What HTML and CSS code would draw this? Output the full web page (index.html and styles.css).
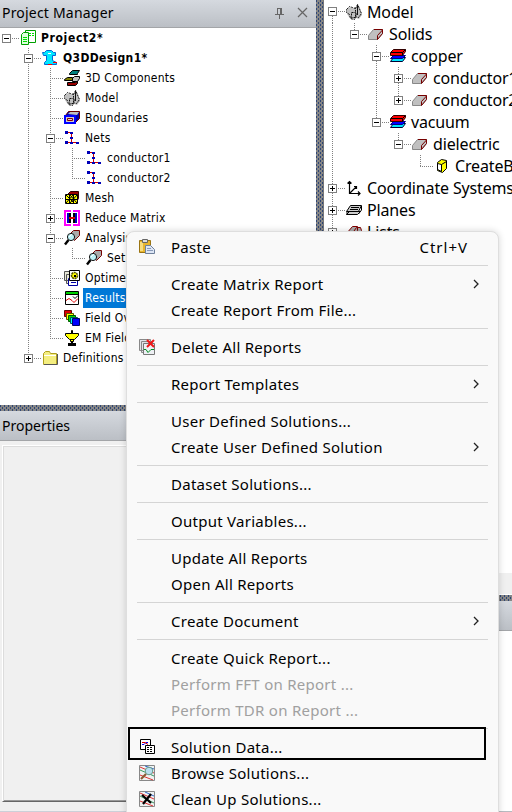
FILE: index.html
```html
<!DOCTYPE html>
<html lang="en">
<head>
<meta charset="utf-8">
<title>Project Manager</title>
<link rel="stylesheet" href="styles.css">
</head>
<body>
<svg class="defs" shape-rendering="crispEdges">
  <symbol id="project" viewBox="0 0 16 16"><path fill="#fff" stroke="#00a000" d="M5.500 .5h10v12h-7M5.500.5v3"/><path fill="#dfffdf" stroke="#00a000" d="M1.500 4.500l2-2h5v12h-7z"/><path stroke="#00e000" d="M9 3.500h2M12 3.500h2M9 5.500h2M12 5.500h2M3 7.500h4M3 9.500h4M3 11.500h4"/></symbol>
  <symbol id="design" viewBox="0 0 16 16"><path fill="#00e8ff" stroke="#0068d8" d="M.5 2.500h2l2-2h5l2 2h2v3h-3v5l4 2v2h-12v-2l2-2v-5h-3z"/><path stroke="#f00" d="M6 14.500h4M11 12.500h4"/><path stroke="#fff" d="M6 3.500h3"/></symbol>
  <symbol id="comps" viewBox="0 0 16 16"><path fill="#008080" stroke="#000" d="M5.500 3.500l3-3h7l-2 3v1h-8z"/><path fill="#c0c0c0" stroke="#000" d="M8.500 8.500l2-2h5v2l-2 3h-5z"/><path fill="#808000" stroke="#000" d="M.5 9.500l3-2h5v3h-8z"/><path fill="#900" stroke="#000" d="M3.500 12.500h8l2-1v2l-2 2h-8z"/></symbol>
  <symbol id="model" viewBox="0 0 16 16"><path fill="#c0c0c0" d="M1 5l3-2 3 1 3-1 2-3 2 4 2 7-3 4-3-1-4 2-3-3-2-3z"/><path stroke="#111" stroke-dasharray="2 1" d="M.5 5.500l3-3 3 1 3 1v3l1 4-2 4-4-1-1-4-3-2zM9.500 4.500l2-4 4 9-3 4h-2M5.500 8.500h4v5h-4z"/><path stroke="#111" d="M11.500 1v10"/></symbol>
  <symbol id="bound" viewBox="0 0 16 16"><path fill="#00a" stroke="#600" d="M1.500 5.500l3-4h11v7l-4 4z"/><path fill="#c0c0c0" d="M4 4l2-2h9l-2 3z"/><path fill="#ccc" stroke="#00f" stroke-width="2" d="M1 6h10v7H1z"/><path fill="#d8d8d8" stroke="#800" d="M3.500 8.500h5v2h-5z"/></symbol>
  <symbol id="nets" viewBox="0 0 16 16"><path stroke="#d00000" d="M2 2.500h7M2 12.500h12M7.500 2v10"/><path fill="#0000b8" d="M1 1h3v3H1zM6 2h3v2H6zM6 7h3v2H6zM1 11h3v3H1zM6 12h3v2H6zM12 12h3v2h-3z"/></symbol>
  <symbol id="mesh" viewBox="0 0 16 16"><path fill="#900" stroke="#300" d="M3.500 4.500l3-3h8v7l-2 3z"/><path fill="#ff0" stroke="#000" d="M1.500 4.500h12v9h-12z"/><path stroke="#000" d="M1.500 9.500h12M5.500 4.500v9M9.500 4.500v9M2 5l8 8M6 5l7 8M13 5l-7 8M9 5l-7 8"/></symbol>
  <symbol id="matrix" viewBox="0 0 16 16"><path fill="#f0f" d="M0 0h7v2H2v12h5v2H0zM9 0h7v16H9v-2h5V2H9z"/><path fill="#0000c0" d="M3 3h2v10H3zM11 3h2v10h-2z"/><path fill="#000" d="M5 3h2v10H5zM9 3h2v10H9z"/><path fill="#d00" d="M5 7h6v2H5z"/></symbol>
  <symbol id="analysis" viewBox="0 0 16 16"><path fill="#aaa" stroke="#700" d="M5.500 4.500l4-4h6v5l-5 5z"/><g shape-rendering="auto"><circle cx="7" cy="7" r="3.600" fill="#bdf3f8" stroke="#111"/><path stroke="#fff" d="M5 7l3-3"/><path stroke="#000" stroke-width="2.400" d="M4.500 10L1 14.500"/></g></symbol>
  <symbol id="opti" viewBox="0 0 16 16"><path fill="#e8e8d8" stroke="#555" d="M.5 1.500h8v9h-8zM2.500 4.500h8v9h-8z"/><path fill="#fff" stroke="#0000a0" d="M4.500 8.500h9v7h-9z"/><path fill="#fff" stroke="#000" d="M5.500.5h10v10h-10z"/><circle cx="10.500" cy="5.500" r="3" fill="#ff0" stroke="#550" stroke-width="1.600" stroke-dasharray="2 .6"/><path fill="#000" d="M10 5h2v2h-2z"/><path stroke="#00a" d="M7 12.500h5"/></symbol>
  <symbol id="results" viewBox="0 0 16 16"><path fill="#fff" stroke="#000" d="M1.500 1.500h13v13h-13z"/><path fill="#00d000" d="M2 2h12v2H2z"/><path stroke="#000" d="M2 4.500h12M9 6.500l2 2 3-3"/><path stroke="#e00000" d="M2 10.500l3-2 3 2 2 2 4-4"/></symbol>
  <symbol id="field" viewBox="0 0 16 16"><path fill="#d00" stroke="#600" d="M.5.5h7v6h-7z"/><path fill="#ff0" stroke="#550" d="M2.500 3.500h7v6h-7z"/><path fill="#0d0" stroke="#050" d="M4.500 5.500h7v6h-7z"/><path fill="#0ff" stroke="#055" d="M6.500 7.500h7v6h-7z"/><path fill="#00f" stroke="#006" d="M8.500 8.500h7v7h-7z"/></symbol>
  <symbol id="em" viewBox="0 0 16 16"><path fill="#ff0" stroke="#000" d="M1.500 3.500h13v2l-4 4h-5l-4-4zM6.500 9.500h3v2h-3z"/><path fill="#ff0" stroke="#000" d="M7.500.5h1v3h-1z"/><path fill="#000" d="M7 11h2v2h3v3H4v-3h3z"/></symbol>
  <symbol id="folder" viewBox="0 0 16 16"><path fill="#f4ee80" stroke="#b0a020" d="M1.500 14.500v-11l2-2h4l1 2h6v11z"/><path stroke="#fff" d="M2 5.500h12"/><path stroke="#555" d="M2 14.500h13.500V4"/></symbol>
  <symbol id="solid" viewBox="0 0 16 16"><path fill="#c0c0c0" stroke="#888" d="M.5 9.500l5-6h9v4l-5 6h-9z"/><path stroke="#700" d="M6 3.500h8.500v4l-5 6v-4l5-5.500"/></symbol>
  <symbol id="stack" viewBox="0 0 16 16"><path fill="#00e8ff" stroke="#003" d="M.5 13.500l3-4h12l-3 4z"/><path fill="#00f" stroke="#000080" d="M.5 10.500l3-3h12l-3 3z"/><path fill="#f00" stroke="#300" d="M.5 4.500l3-3h12v2l-3 4h-12z"/><path stroke="#000" d="M1 4.500h11.500v3M12.500 4.500l3-3"/></symbol>
  <symbol id="box" viewBox="0 0 16 16"><path fill="#ff0" stroke="#000" d="M3.500 4.500l4-3 5 1v8l-4 4-5-2z"/><path fill="#fff" stroke="#000" d="M3.500 5.500l4 1v7l-4-2z"/><path stroke="#000" d="M7.500 6.500l5-3"/></symbol>
  <symbol id="axes" viewBox="0 0 16 16"><path stroke="#000" stroke-width="1.200" shape-rendering="auto" d="M3.500 1.500v12H14M3.500 13.500l7-7M1.500 3.500l2-2 2 2M12 11.500l2 2-2 2M8 6.500h2.500V9"/></symbol>
  <symbol id="planes" viewBox="0 0 16 16"><path fill="#ccc" stroke="#000" d="M.5 12.500l3-3h11l-3 3zM.5 9.500l4-6h11l-3 6z"/><path stroke="#000" d="M5 5.500h8M4 7.500h8M12.500 12l3-4v-4M1 9.500v3"/></symbol>
  <symbol id="lists" viewBox="0 0 16 16"><path fill="#aaa" stroke="#800000" d="M.5 9.500l6-7h5v4l-6 7h-5zM5.500 10.500l5-7h4l1 3-5 7h-5z"/></symbol>
  <symbol id="paste" viewBox="0 0 16 16"><path fill="#e8b52e" stroke="#9a7412" d="M.5 1.500h11v12h-11z"/><path fill="#f8dd80" d="M1 3h3v9H1z"/><path fill="#ddd" stroke="#666" d="M3.500.5h5v3h-5z"/><path fill="#dde6f5" stroke="#6f819c" d="M6.500 6.500h5l4 4v4h-9z"/><path stroke="#8799b8" d="M8 9.500h4M8 11.500h6"/></symbol>
  <symbol id="delrep" viewBox="0 0 16 16"><path fill="#e0e3e8" stroke="#888" d="M.5.500h11v11H.5zM2.500 2.500h11v11h-11z"/><path fill="#edf0f4" stroke="#777" d="M4.500 4.500h11v11h-11z"/><path stroke="#009020" d="M5 10.500h2l2 3 3-3h3"/><path shape-rendering="auto" stroke="#f01818" stroke-width="2" d="M8 1l7 7M15 1L8 8"/></symbol>
  <symbol id="soldata" viewBox="0 0 16 16"><path fill="#fff" stroke="#000" d="M1.500.5h10v10h-10z"/><path stroke="#00f" d="M3 5.500h2l2-2h2"/><path stroke="#d00" d="M3 3.500h3l3 2"/><path fill="#fff" stroke="#000" d="M6.500 6.500h9v8h-9z"/><path stroke="#000" stroke-dasharray="2 1" d="M8 8.500h6M8 10.500h6M8 12.500h6"/></symbol>
  <symbol id="browse" viewBox="0 0 16 16"><path fill="#eef2f2" stroke="#888" d="M.5.500h15v15H.5z"/><path stroke="#d33" d="M1 2l14 6M1 10l13 5"/><path stroke="#3a9a60" d="M1 5l14 6"/><path stroke="#36c" d="M6 1l9 3"/><g shape-rendering="auto"><circle cx="10" cy="6" r="3.800" fill="#b9dff0" stroke="#698"/><path stroke="#8a5a33" stroke-width="2.200" d="M7 9l-5 5"/></g></symbol>
  <symbol id="clean" viewBox="0 0 16 16"><path fill="#eef2f2" stroke="#888" d="M.5.500h15v15H.5z"/><path stroke="#d33" d="M1 2l14 6M1 10l13 5"/><path stroke="#3a9a60" d="M1 5l14 7"/><path stroke="#36c" d="M6 1l9 4"/><path shape-rendering="auto" stroke="#000" stroke-width="2.200" d="M3 4l9 8M12 3l-8 10"/></symbol>
  <symbol id="chev" viewBox="0 0 8 10"><path shape-rendering="auto" fill="none" stroke="#222" stroke-width="1.300" d="M1 1l4 4-4 4"/></symbol>
</svg>

<main class="app">
  <section class="dock">
    <header class="title first"><span>Project Manager</span>
      <svg class="pin" width="11" height="12"><path d="M3.500 1v6M3 1.500h5M7.500 1v6M6.500 1v6M1 7.500h9M5.500 8v4"/></svg>
      <svg class="close" width="11" height="11"><path d="M1 1l9 9M10 1l-9 9"/></svg>
    </header>
    <div class="tree left">
      <div class="row b"><i class="c x m last first"></i><svg class="ic"><use href="#project"/></svg><span>Project2*</span></div>
      <div class="row b"><i class="c"></i><i class="c x m"></i><svg class="ic"><use href="#design"/></svg><span class="tight">Q3DDesign1*</span></div>
      <div class="row"><i class="c"></i><i class="c v"></i><i class="c v h"></i><svg class="ic"><use href="#comps"/></svg><span>3D Components</span></div>
      <div class="row"><i class="c"></i><i class="c v"></i><i class="c v h"></i><svg class="ic"><use href="#model"/></svg><span>Model</span></div>
      <div class="row"><i class="c"></i><i class="c v"></i><i class="c v h"></i><svg class="ic"><use href="#bound"/></svg><span>Boundaries</span></div>
      <div class="row"><i class="c"></i><i class="c v"></i><i class="c x m"></i><svg class="ic"><use href="#nets"/></svg><span>Nets</span></div>
      <div class="row"><i class="c"></i><i class="c v"></i><i class="c v"></i><i class="c v h"></i><svg class="ic"><use href="#nets"/></svg><span>conductor1</span></div>
      <div class="row"><i class="c"></i><i class="c v"></i><i class="c v"></i><i class="c v h last"></i><svg class="ic"><use href="#nets"/></svg><span>conductor2</span></div>
      <div class="row"><i class="c"></i><i class="c v"></i><i class="c v h"></i><svg class="ic"><use href="#mesh"/></svg><span>Mesh</span></div>
      <div class="row"><i class="c"></i><i class="c v"></i><i class="c x p"></i><svg class="ic"><use href="#matrix"/></svg><span>Reduce Matrix</span></div>
      <div class="row"><i class="c"></i><i class="c v"></i><i class="c x m"></i><svg class="ic"><use href="#analysis"/></svg><span>Analysis</span></div>
      <div class="row"><i class="c"></i><i class="c v"></i><i class="c v"></i><i class="c v h last"></i><svg class="ic"><use href="#analysis"/></svg><span>Setup1</span></div>
      <div class="row"><i class="c"></i><i class="c v"></i><i class="c v h"></i><svg class="ic"><use href="#opti"/></svg><span>Optimetrics</span></div>
      <div class="row"><i class="c"></i><i class="c v"></i><i class="c v h"></i><svg class="ic"><use href="#results"/></svg><span class="sel">Results</span></div>
      <div class="row"><i class="c"></i><i class="c v"></i><i class="c v h"></i><svg class="ic"><use href="#field"/></svg><span>Field Overlays</span></div>
      <div class="row"><i class="c"></i><i class="c v"></i><i class="c v h last"></i><svg class="ic"><use href="#em"/></svg><span>EM Fields</span></div>
      <div class="row"><i class="c"></i><i class="c x p last"></i><svg class="ic"><use href="#folder"/></svg><span>Definitions</span></div>
    </div>
    <div class="split"></div>
    <header class="title"><span class="plain">Properties</span></header>
    <div class="props"><div class="sheet"></div></div>
  </section>
  <div class="split vert"></div>
  <section class="side">
    <div class="tree right">
      <div class="row"><i class="c x m first"></i><svg class="ic"><use href="#model"/></svg><span>Model</span></div>
      <div class="row"><i class="c v"></i><i class="c x m last"></i><svg class="ic"><use href="#solid"/></svg><span>Solids</span></div>
      <div class="row"><i class="c v"></i><i class="c"></i><i class="c x m"></i><svg class="ic"><use href="#stack"/></svg><span>copper</span></div>
      <div class="row"><i class="c v"></i><i class="c"></i><i class="c v"></i><i class="c x p"></i><svg class="ic"><use href="#solid"/></svg><span>conductor1</span></div>
      <div class="row"><i class="c v"></i><i class="c"></i><i class="c v"></i><i class="c x p last"></i><svg class="ic"><use href="#solid"/></svg><span>conductor2</span></div>
      <div class="row"><i class="c v"></i><i class="c"></i><i class="c x m last"></i><svg class="ic"><use href="#stack"/></svg><span>vacuum</span></div>
      <div class="row"><i class="c v"></i><i class="c"></i><i class="c"></i><i class="c x m last"></i><svg class="ic"><use href="#solid"/></svg><span>dielectric</span></div>
      <div class="row"><i class="c v"></i><i class="c"></i><i class="c"></i><i class="c"></i><i class="c v h last"></i><svg class="ic"><use href="#box"/></svg><span>CreateBox</span></div>
      <div class="row"><i class="c x p"></i><svg class="ic"><use href="#axes"/></svg><span>Coordinate Systems</span></div>
      <div class="row"><i class="c x p"></i><svg class="ic"><use href="#planes"/></svg><span>Planes</span></div>
      <div class="row"><i class="c x p last"></i><svg class="ic"><use href="#lists"/></svg><span>Lists</span></div>
    </div>
    <div class="scroll"></div>
    <div class="split"></div>
    <header class="title"></header>
    <div class="blank"></div>
  </section>
</main>

<nav class="menu">
  <div class="item"><svg class="ic"><use href="#paste"/></svg><span>Paste</span><kbd>Ctrl+V</kbd></div>
  <hr>
  <div class="item"><span>Create Matrix Report</span><svg class="chev"><use href="#chev"/></svg></div>
  <div class="item"><span>Create Report From File...</span></div>
  <hr>
  <div class="item"><svg class="ic"><use href="#delrep"/></svg><span>Delete All Reports</span></div>
  <hr>
  <div class="item"><span>Report Templates</span><svg class="chev"><use href="#chev"/></svg></div>
  <hr>
  <div class="item"><span>User Defined Solutions...</span></div>
  <div class="item"><span>Create User Defined Solution</span><svg class="chev"><use href="#chev"/></svg></div>
  <hr>
  <div class="item"><span>Dataset Solutions...</span></div>
  <hr>
  <div class="item"><span>Output Variables...</span></div>
  <hr>
  <div class="item"><span>Update All Reports</span></div>
  <div class="item"><span>Open All Reports</span></div>
  <hr>
  <div class="item"><span>Create Document</span><svg class="chev"><use href="#chev"/></svg></div>
  <hr>
  <div class="item"><span>Create Quick Report...</span></div>
  <div class="item off"><span>Perform FFT on Report ...</span></div>
  <div class="item off"><span>Perform TDR on Report ...</span></div>
  <hr>
  <div class="item marked"><svg class="ic"><use href="#soldata"/></svg><span>Solution Data...</span></div>
  <div class="item"><svg class="ic"><use href="#browse"/></svg><span>Browse Solutions...</span></div>
  <div class="item"><svg class="ic"><use href="#clean"/></svg><span>Clean Up Solutions...</span></div>
</nav>
</body>
</html>
```
FILE: styles.css
```css
*, *::before, *::after { box-sizing: border-box; }
body {
  margin: 0;
  width: 512px;
  height: 812px;
  overflow: hidden;
  position: relative;
  background: #fff;
  color: #000;
  font-family: "Noto Sans", sans-serif;
}
.defs { display: none; }
.app { display: flex; width: 512px; height: 812px; overflow: hidden; }
.dock { width: 316px; flex: none; display: flex; flex-direction: column; }
.side { flex: 1; min-width: 0; display: flex; flex-direction: column; border-left: 1px solid #777; }

.title {
  height: 30px;
  flex: none;
  display: flex;
  align-items: center;
  padding: 0 8px 0 2px;
  background: linear-gradient(#d5d9df, #bbbfc5);
  border-bottom: 1px solid #a3a5a8;
  font-size: 14px;
  letter-spacing: .2px;
}
.title .plain { letter-spacing: 0; }
.title.first { height: 28px; padding-bottom: 2px; }
.title svg { fill: none; stroke: #666; }
.pin { margin-left: auto; margin-right: 12px; }
.close { stroke-width: 1.2; }

.split {
  height: 6px;
  flex: none;
  background-color: #868686;
  background-image:
    conic-gradient(from 270deg at 1px 2px, #2f4675 90deg, transparent 0),
    conic-gradient(from 270deg at 1px 2px, #2f4675 90deg, transparent 0);
  background-size: 4px 4px;
  background-position: 0 0, 2px 2px;
}
.split.vert { width: 7px; height: auto; }

.tree { overflow: hidden; flex: none; }
.tree.left {
  height: 377px;
  margin-left: -5px;
  font: 12px "DejaVu Sans Condensed", "DejaVu Sans", sans-serif;
  font-stretch: condensed;
  letter-spacing: .25px;
}
.tree.right { height: 573px; padding-top: 1px; font-size: 16px; letter-spacing: -.15px; margin-left: -3px; }
.row { display: flex; align-items: center; height: 20px; white-space: nowrap; }
.right .row { height: 22px; }
.row.b { font-weight: bold; letter-spacing: .65px; }
.row .tight { letter-spacing: .35px; }
.row .ic { margin: 0 3px; }
.row span { padding: 0 2px; line-height: 20px; }
.left .row span { padding-top: 1px; line-height: 19px; }
.row .sel { background: #0078d7; color: #fff; }
.ic { width: 16px; height: 16px; flex: none; fill: none; }

.c {
  width: 22px;
  height: 100%;
  flex: none;
  display: grid;
  place-items: center;
  position: relative;
  --dot: repeating-linear-gradient(#808080 0 1px, transparent 1px 2px);
  --dash: repeating-linear-gradient(90deg, #808080 0 1px, transparent 1px 2px);
}
.c.v, .c.x { background: var(--dot) 11px 0 / 1px 100% no-repeat; }
.c.last { background-size: 1px 50%; }
.c.first { background-position: 11px 11px; }
.c.first.last { background: none; }
.c.h::after, .c.x::after {
  content: "";
  position: absolute;
  left: 11px;
  top: 50%;
  width: 14px;
  height: 1px;
  background: var(--dash);
}
.c.x::after { left: 17px; width: 8px; }
.c.x::before {
  content: "";
  width: 9px;
  height: 9px;
  margin: 1px 0 0 1px;
  border: 1px solid #808080;
  background: linear-gradient(#000, #000) center / 5px 1px no-repeat #fff;
}
.c.p::before {
  background: linear-gradient(#000, #000) center / 5px 1px no-repeat, linear-gradient(#000, #000) center / 1px 5px no-repeat #fff;
}
.right .c.first::before { margin-top: -1px; }
.right .c.first::after { top: 10px; }

.props { flex: 1; background: #f0f0f0; padding: 4px 0 9px 2px; border-bottom: 1px solid #ccd0d8; }
.props .sheet { height: 100%; border: 1px solid #fff; border-bottom: 1px solid #666; box-shadow: inset 1px 1px #dcdcdc, inset 0 -1px #999; }
.scroll { height: 22px; background: #f0f0f0; border-bottom: 1px solid #fff; }
.blank { flex: 1; border-bottom: 1px solid #b8bbc0; }

.menu {
  position: absolute;
  left: 126px;
  top: 231px;
  width: 373px;
  height: 600px;
  padding: 2px 10px 0;
  background: #f9f9f9;
  border: 1px solid #dedede;
  border-radius: 8px;
  box-shadow: 0 0 7px rgba(0, 0, 0, .16);
  font-size: 15px;
  letter-spacing: .27px;
}
.item { position: relative; height: 26px; display: flex; align-items: center; padding: 0 4px 0 34px; white-space: nowrap; }
.item .ic { margin-left: -32px; margin-right: 16px; }
.item.off { color: #a0a0a0; }
.item kbd { margin-left: auto; margin-right: 16px; font: inherit; letter-spacing: 1px; }
.chev { width: 8px; height: 10px; margin-left: auto; margin-right: 3px; }
.menu hr { height: 1px; margin: 5px 0; border: 0; background: #d5d5d5; }
.marked::before {
  content: "";
  position: absolute;
  left: -9px;
  top: -7px;
  width: 358px;
  height: 33px;
  border: 2px solid #000;
}
```
